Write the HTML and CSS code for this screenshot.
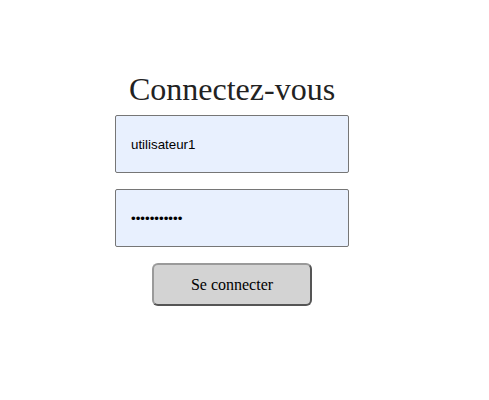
FILE: index.html
```html
<!DOCTYPE html>
<html lang="fr">
<head>
<meta charset="utf-8">
<title>Connexion</title>
<link rel="stylesheet" href="styles.css">
</head>
<body>
<div class="page">
  <h1 class="title">Connectez-vous</h1>
  <form class="form">
    <input class="field" type="text" value="utilisateur1">
    <input class="field" type="password" value="motdepasse1">
    <button class="submit" type="button">Se connecter</button>
  </form>
</div>
</body>
</html>
```
FILE: styles.css
```css
html, body {
  margin: 0;
  padding: 0;
  background: #ffffff;
}
.page {
  width: 464px;
  padding-top: 71px;
  display: flex;
  flex-direction: column;
  align-items: center;
  font-family: "Liberation Serif", serif;
}
.title {
  margin: 0 0 8px 0;
  font-size: 32px;
  font-weight: normal;
  color: #222222;
  line-height: 36px;
}
.form {
  display: flex;
  flex-direction: column;
  align-items: center;
  gap: 16px;
}
.field {
  box-sizing: border-box;
  width: 234px;
  height: 58px;
  margin: 0;
  padding: 0 15px;
  border: 1px solid #767676;
  border-radius: 2px;
  background-color: #e8f0fe;
  font-family: "Liberation Sans", Arial, sans-serif;
  font-size: 13.33px;
  color: #000000;
  outline: none;
}
.submit {
  box-sizing: border-box;
  width: 160px;
  height: 43px;
  margin: 0;
  border-width: 2px;
  border-style: solid;
  border-color: #9a9a9a #555555 #555555 #9a9a9a;
  border-radius: 6px;
  background: #d3d3d3;
  font-family: "Liberation Serif", serif;
  font-size: 16px;
  color: #000000;
}
```
